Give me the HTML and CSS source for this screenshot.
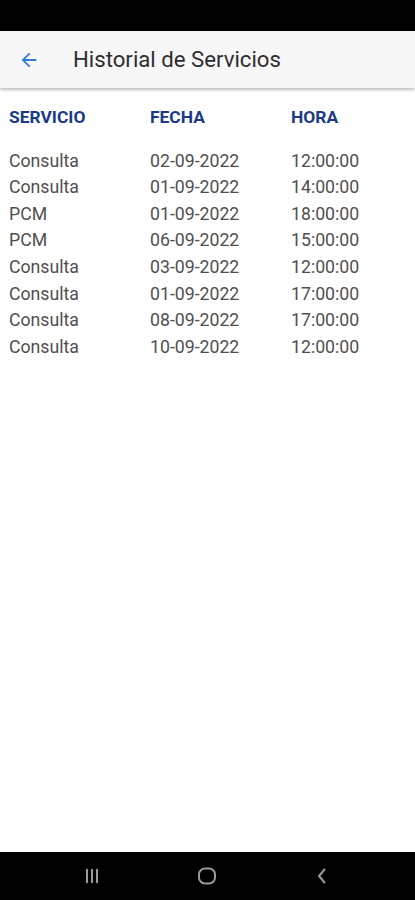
FILE: index.html
```html
<!DOCTYPE html>
<html lang="es">

<head>
    <meta charset="UTF-8">
    <meta name="viewport" content="width=device-width, initial-scale=1.0">
    <title>Historial de Servicios</title>
    <link rel="stylesheet" href="styles.css">
</head>

<body>
    <div class="status-bar"></div>
    <div class="app-bar">
        <svg class="back" width="22" height="22" viewBox="0 0 24 24">
            <path d="M20 11H7.83l5.59-5.59L12 4l-8 8 8 8 1.41-1.41L7.83 13H20v-2z" fill="#2f7de1"/>
        </svg>
        <span class="title">Historial de Servicios</span>
    </div>
    <div class="content">
        <div class="row head">
            <span>SERVICIO</span>
            <span>FECHA</span>
            <span>HORA</span>
        </div>
        <div class="rows">
            <div class="row"><span>Consulta</span><span>02-09-2022</span><span>12:00:00</span></div>
            <div class="row"><span>Consulta</span><span>01-09-2022</span><span>14:00:00</span></div>
            <div class="row"><span>PCM</span><span>01-09-2022</span><span>18:00:00</span></div>
            <div class="row"><span>PCM</span><span>06-09-2022</span><span>15:00:00</span></div>
            <div class="row"><span>Consulta</span><span>03-09-2022</span><span>12:00:00</span></div>
            <div class="row"><span>Consulta</span><span>01-09-2022</span><span>17:00:00</span></div>
            <div class="row"><span>Consulta</span><span>08-09-2022</span><span>17:00:00</span></div>
            <div class="row"><span>Consulta</span><span>10-09-2022</span><span>12:00:00</span></div>
        </div>
    </div>
    <div class="nav-bar">
        <svg width="18" height="18" viewBox="0 0 18 18">
            <path d="M4 2v14M9 2v14M14 2v14" stroke="#9a9a9a" stroke-width="2"/>
        </svg>
        <svg width="20" height="20" viewBox="0 0 20 20">
            <rect x="2" y="2.5" width="16" height="15" rx="6" fill="none" stroke="#9a9a9a" stroke-width="2"/>
        </svg>
        <svg width="18" height="18" viewBox="0 0 18 18">
            <path d="M12 2L6 9l6 7" fill="none" stroke="#9a9a9a" stroke-width="2"/>
        </svg>
    </div>
</body>

</html>
```

FILE: styles.css
```css
body {
    margin: 0;
    padding: 0;
    height: 100vh;
    display: flex;
    flex-direction: column;
    background-color: #ffffff;
    font-family: Roboto, "Liberation Sans", sans-serif;
}

.status-bar {
    height: 31px;
    background-color: #000000;
}

.app-bar {
    height: 57px;
    background-color: #f7f7f7;
    display: flex;
    align-items: center;
    padding-left: 18px;
    box-shadow: 0 2px 3px rgba(0, 0, 0, 0.25);
    z-index: 1;
}

.app-bar .back {
    display: block;
}

.app-bar .title {
    margin-left: 33px;
    font-size: 22.2px;
    color: #2e2e2e;
    padding-bottom: 2px;
}

.content {
    flex-grow: 1;
    padding: 16px 9px 0;
}

.row {
    display: grid;
    grid-template-columns: 141px 141px 1fr;
    font-size: 17.7px;
    color: #4f4f4f;
    height: 26.6px;
    line-height: 26.6px;
}

.row.head {
    font-weight: bold;
    font-size: 17.4px;
    color: #1a3a88;
    margin-bottom: 17px;
}

.nav-bar {
    height: 48px;
    background-color: #000000;
    display: flex;
    align-items: center;
    justify-content: center;
    gap: 96px;
    padding-right: 2px;
}
```
